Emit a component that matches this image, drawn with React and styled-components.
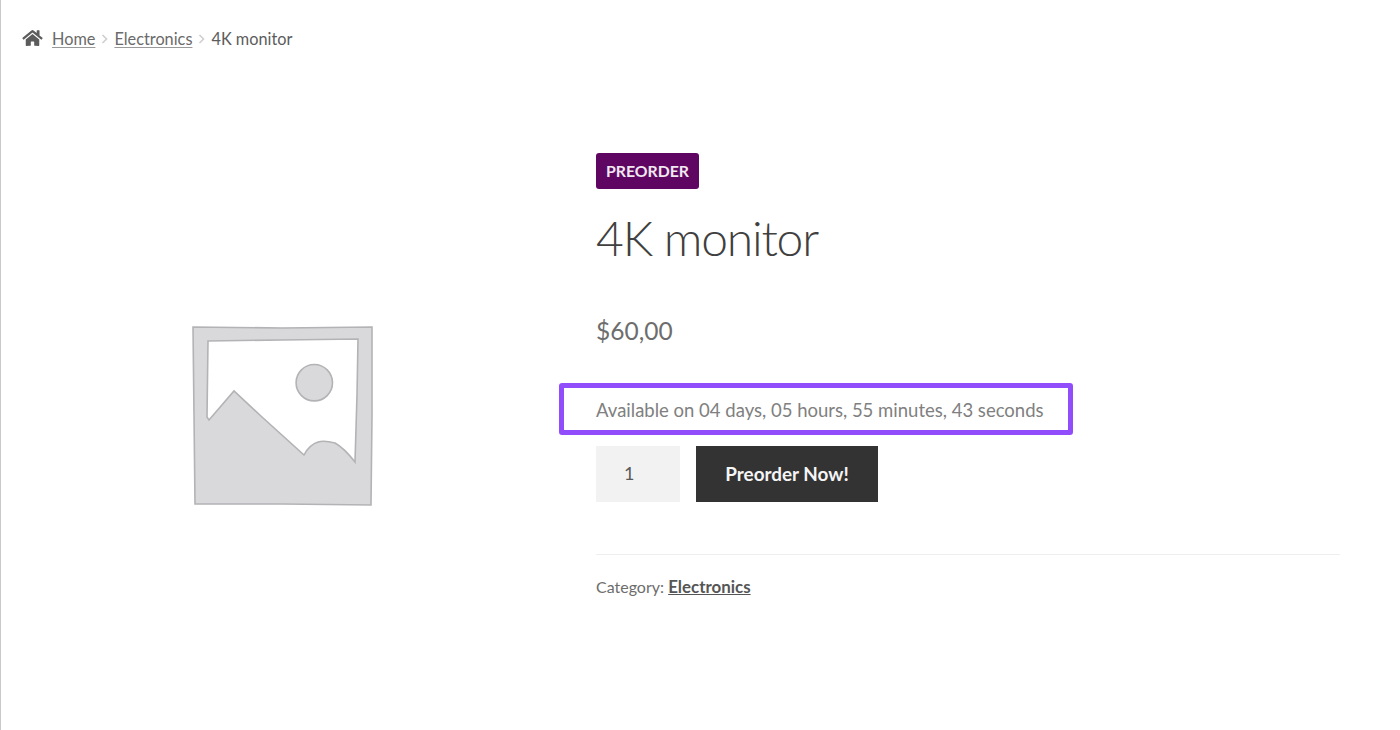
import React from 'react';
import styled, { createGlobalStyle } from 'styled-components';
import { FaHome } from 'react-icons/fa';

const Global = createGlobalStyle`
  html, body { margin: 0; padding: 0; background: #fff; }
  body { font-family: "Lato", "Noto Sans", sans-serif; color: #6d6d6d; }
  * { box-sizing: border-box; }
`;

const Page = styled.div`
  width: 1400px;
  height: 730px;
  border-left: 1px solid #c9c9c9;
  padding: 29px 60px 0 21px;
  overflow: hidden;
`;

const Breadcrumb = styled.nav`
  display: flex;
  align-items: center;
  height: 19px;
  font-size: 16.3px;
  line-height: 19px;
  color: #5c5c5c;
`;

const HomeIcon = styled(FaHome)`
  width: 21px;
  height: 18px;
  color: #5c5c5c;
  margin: -2px 9px 0 0;
`;

const Crumb = styled.a`
  color: #6a6a6a;
  text-decoration: underline;
  text-underline-offset: 2px;
  text-decoration-color: #999;
`;

const Sep = styled.svg`
  width: 7px;
  height: 10px;
  margin: 0 6px;
  fill: none;
  stroke: #cfcfcf;
  stroke-width: 1.6;
`;

const Main = styled.main`
  display: grid;
  grid-template-columns: 574px 744px;
  margin-top: 105px;
`;

const Gallery = styled.div`
  padding: 172px 0 0 170px;
`;

const Placeholder = styled.svg`
  display: block;
  width: 181px;
  height: 182px;
`;

const Summary = styled.section`
  display: flex;
  flex-direction: column;
  align-items: flex-start;
`;

const Badge = styled.span`
  display: flex;
  align-items: center;
  justify-content: center;
  width: 103px;
  height: 36px;
  padding-bottom: 1px;
  background: #5f0663;
  border-radius: 3px;
  color: #f1e9f1;
  font-size: 15.8px;
  font-weight: 700;
`;

const Title = styled.h1`
  margin: 18px 0 0;
  font-size: 48px;
  line-height: 62px;
  font-weight: 300;
  letter-spacing: -1.2px;
  color: #404040;
`;

const Price = styled.p`
  margin: 44px 0 0;
  font-size: 24.5px;
  line-height: 36px;
  color: #6d6d6d;
`;

const Highlight = styled.div`
  display: flex;
  align-items: center;
  width: 514px;
  height: 52px;
  margin: 34px 0 0 -37px;
  padding: 2px 0 0 32px;
  border: 5px solid #914dfb;
  border-radius: 3px;
  font-size: 18.5px;
  color: #808080;
`;

const CartRow = styled.div`
  display: flex;
  gap: 16px;
  margin-top: 11px;
`;

const Qty = styled.div`
  display: flex;
  align-items: center;
  width: 84px;
  height: 56px;
  padding: 0 0 2px 28px;
  background: #f2f2f2;
  font-size: 18px;
  color: #5a5a5a;
`;

const Button = styled.button`
  width: 182px;
  height: 56px;
  padding: 0 0 2px;
  border: 0;
  background: #333;
  color: #f5f5f5;
  font-family: inherit;
  font-size: 18.9px;
  font-weight: 700;
`;

const Meta = styled.div`
  width: 100%;
  margin-top: 52px;
  padding-top: 22px;
  border-top: 1px solid #eee;
  font-size: 16px;
  line-height: 20px;
  color: #6d6d6d;
`;

const MetaLink = styled.a`
  color: #555;
  font-size: 16.9px;
  font-weight: 700;
  text-decoration: underline;
`;

const Chevron = () => (
  <Sep viewBox="0 0 7 10"><path d="M1.5 1 L5.5 5 L1.5 9" /></Sep>
);

export default function App() {
  return (
    <>
      <Global />
      <Page>
        <Breadcrumb>
          <HomeIcon />
          <Crumb>Home</Crumb>
          <Chevron />
          <Crumb>Electronics</Crumb>
          <Chevron />
          <span>4K monitor</span>
        </Breadcrumb>
        <Main>
          <Gallery>
            <Placeholder viewBox="0 0 181 182">
              <defs>
                <filter id="soft" x="-5%" y="-5%" width="110%" height="110%">
                  <feGaussianBlur stdDeviation="0.5" />
                </filter>
              </defs>
              <g filter="url(#soft)">
                <path
                  fillRule="evenodd"
                  fill="#d9d9dc"
                  stroke="#b3b3b6"
                  strokeWidth="1.6"
                  d="M1 2 L90 3 L180 2 L180 90 L179 180 L90 179 L3 179 L2 90 Z M16 16 L90 15 L166 14 L165 70 L163 137 Q152 123 143 118 Q132 115 126 117 Q117 120 112 130 L70 92 L42 66 L17 95 L15 92 Z"
                />
                <circle cx="122.3" cy="57.7" r="18.2" fill="#d9d9dc" stroke="#b3b3b6" strokeWidth="1.6" />
              </g>
            </Placeholder>
          </Gallery>
          <Summary>
            <Badge>PREORDER</Badge>
            <Title>4K monitor</Title>
            <Price>$60,00</Price>
            <Highlight>Available on 04 days, 05 hours, 55 minutes, 43 seconds</Highlight>
            <CartRow>
              <Qty>1</Qty>
              <Button>Preorder Now!</Button>
            </CartRow>
            <Meta>
              Category: <MetaLink>Electronics</MetaLink>
            </Meta>
          </Summary>
        </Main>
      </Page>
    </>
  );
}
